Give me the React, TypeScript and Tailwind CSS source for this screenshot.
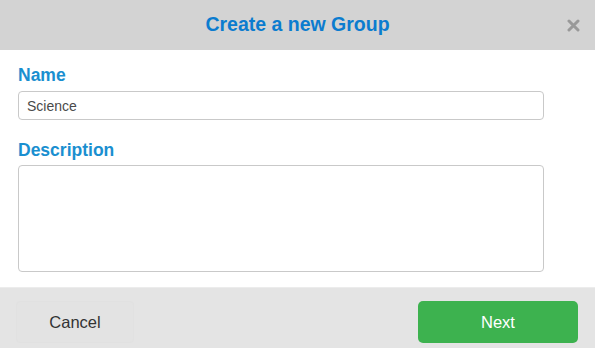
import * as React from 'react';

const App: React.FC = () => {
    return (
        <div className="w-[595px] h-[348px] bg-white flex flex-col font-['Liberation_Sans',Arial,sans-serif]">
            <div className="h-[50px] bg-[#d3d3d3] flex items-center justify-center relative">
                <h1 className="text-[19.5px] font-bold text-[#0b7ccf] leading-none">Create a new Group</h1>
                <span className="absolute right-[15px] top-[19px] text-[#999]">
                    <svg width="13" height="13" viewBox="0 0 13 13">
                        <path d="M2 2 L11 11 M11 2 L2 11" stroke="currentColor" strokeWidth="3" strokeLinecap="round" />
                    </svg>
                </span>
            </div>
            <div className="flex-1 px-[18px] pt-[16px]">
                <label className="block h-[18px] text-[17.5px] font-bold text-[#1a8fd0] leading-[18px] mb-[7px]">Name</label>
                <input
                    className="block w-[526px] h-[29px] border border-[#c9c9c9] rounded-[4px] px-[8px] text-[14px] text-[#4a4a4a] outline-none"
                    defaultValue="Science"
                />
                <label className="block h-[18px] text-[17.5px] font-bold text-[#1a8fd0] leading-[18px] mt-[21px] mb-[6px]">Description</label>
                <textarea className="block w-[526px] h-[107px] border border-[#c9c9c9] rounded-[4px] resize-none outline-none" />
            </div>
            <div className="h-[61px] bg-[#e4e4e4] border-t border-[#ececec] flex items-start justify-between pt-[13px] pl-[16px] pr-[17px]">
                <button className="w-[118px] h-[42px] rounded-[4px] bg-[#e3e3e3] border border-[#e1e1e1] text-[16.5px] text-[#333]">Cancel</button>
                <button className="w-[160px] h-[42px] rounded-[5px] bg-[#3db24f] text-[16.5px] text-white">Next</button>
            </div>
        </div>
    );
};

export default App;
